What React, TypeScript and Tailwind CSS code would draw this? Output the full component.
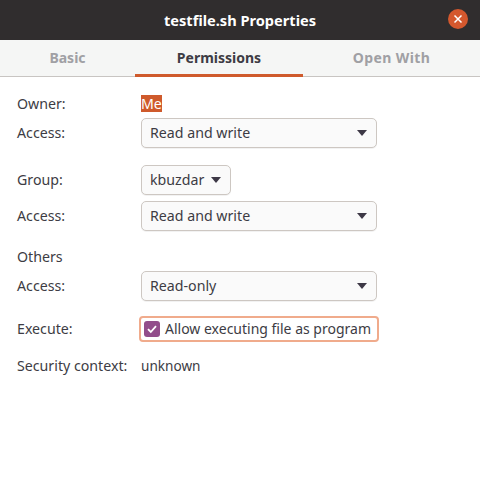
import React from 'react';

const FONT = "font-['Noto_Sans','Open_Sans',sans-serif]";

function Caret() {
  return <span className="w-0 h-0 border-x-[5.5px] border-x-transparent border-t-[6px] border-t-[#3d3846]" />;
}

function Select({ value, wide = true }: { value: string; wide?: boolean }) {
  return (
    <div
      className={`h-[30px] flex items-center justify-between rounded-[5px] border border-[#cdc7c2] bg-[#fafafa] shadow-[0_1px_0_rgba(0,0,0,0.05)] text-[#3d3c44] ${
        wide ? 'w-[236px] pl-[8px] pr-[9px]' : 'w-[90px] pl-[8px] pr-[9px]'
      }`}
    >
      <span>{value}</span>
      <Caret />
    </div>
  );
}

function Row({ label, children, className = '' }: { label: string; children?: React.ReactNode; className?: string }) {
  return (
    <div className={`flex items-center ${className}`}>
      <span className="w-[124px] shrink-0 text-[#3d3c44] whitespace-nowrap">{label}</span>
      {children}
    </div>
  );
}

export default function App() {
  return (
    <div className={`w-[480px] h-[480px] bg-white flex flex-col text-[14.2px] leading-[20px] ${FONT}`}>
      {/* Title bar */}
      <div className="h-[40px] shrink-0 bg-[#302d2e] flex items-center relative">
        <span className="flex-1 text-center text-white font-bold text-[14.6px]">testfile.sh Properties</span>
        <span className="absolute right-[12px] top-[9px] w-[20px] h-[20px] rounded-full bg-[#d4582e] flex items-center justify-center">
          <svg width="10" height="10" viewBox="0 0 10 10">
            <path d="M1.5 1.5 8.5 8.5M8.5 1.5 1.5 8.5" stroke="#fff" strokeWidth="1.5" />
          </svg>
        </span>
      </div>

      {/* Tabs */}
      <div className="h-[37px] shrink-0 bg-[#f5f6f5] border-b border-[#c8c5c2] flex font-bold text-center text-[14px]">
        <div className="w-[135px] h-[36px] pt-[8px] text-[#a0a0a4]">Basic</div>
        <div className="w-[168px] h-[37px] pt-[8px] text-[#3d3c44] border-b-[3px] border-[#cf5a2c]">Permissions</div>
        <div className="flex-1 h-[36px] pt-[8px] text-[#a0a0a4] tracking-[0.4px]">Open With</div>
      </div>

      {/* Form */}
      <div className="pl-[17px] flex flex-col">
        <Row label="Owner:" className="mt-[17px] h-[20px]">
          <span className="bg-[#cf5a2c] text-white h-[17px] leading-[17px] w-[21px] -mt-[2px] overflow-hidden">Me</span>
        </Row>
        <Row label="Access:" className="mt-[4px]">
          <Select value="Read and write" />
        </Row>
        <Row label="Group:" className="mt-[17px]">
          <Select value="kbuzdar" wide={false} />
        </Row>
        <Row label="Access:" className="mt-[6px]">
          <Select value="Read and write" />
        </Row>
        <Row label="Others" className="mt-[16px] h-[20px]" />
        <Row label="Access:" className="mt-[4px]">
          <Select value="Read-only" />
        </Row>
        <Row label="Execute:" className="mt-[15px]">
          <div className="h-[26px] w-[240px] -ml-[2px] rounded-[4px] border-2 border-[#f0ab8c] flex items-center pl-[3px] text-[#3d3c44]">
            <span className="w-[16px] h-[16px] shrink-0 rounded-[3px] bg-[#924d8b] flex items-center justify-center">
              <svg width="12" height="12" viewBox="0 0 12 12" fill="none">
                <path d="M2 6.2 4.8 9 10 3.2" stroke="#fff" strokeWidth="1.8" />
              </svg>
            </span>
            <span className="ml-[5px] whitespace-nowrap text-[14px]">Allow executing file as program</span>
          </div>
        </Row>
        <Row label="Security context:" className="mt-[14px]">
          <span className="text-[#3d3c44] text-[13.6px]">unknown</span>
        </Row>
      </div>
    </div>
  );
}
